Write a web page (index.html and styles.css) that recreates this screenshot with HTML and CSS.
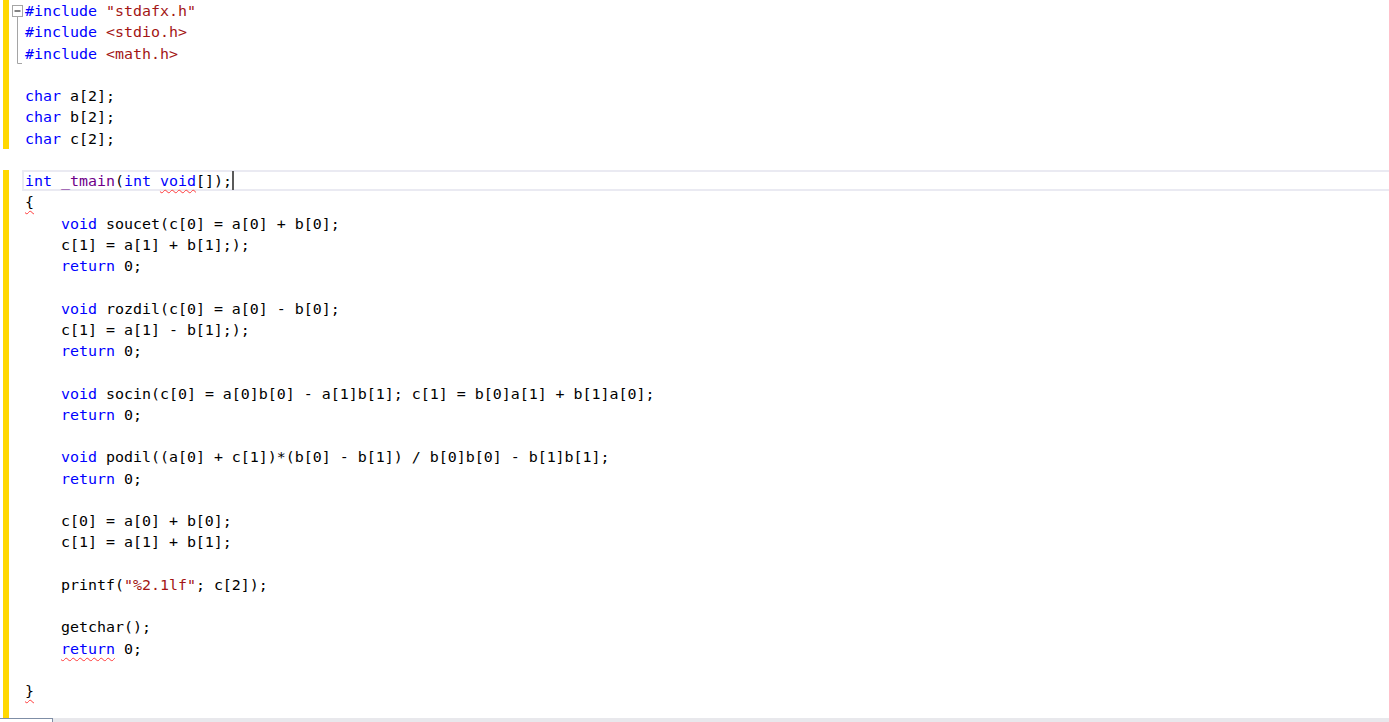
FILE: index.html
```html
<!DOCTYPE html>
<html>
<head>
<meta charset="utf-8">
<link rel="stylesheet" href="styles.css">
</head>
<body>
<div class="editor">
  <div class="line chg"><span class="mark"></span><span class="fold"><svg width="16" height="22" viewBox="0 0 16 22"><rect x="3.5" y="5.5" width="10" height="11" fill="#fff" stroke="#a5a5a5"/><line x1="5.5" y1="11" x2="11.5" y2="11" stroke="#333" stroke-width="1.2"/><line x1="8.5" y1="16.5" x2="8.5" y2="22" stroke="#a5a5a5"/></svg></span><span class="code"><span class="kw">#include</span> <span class="str">"stdafx.h"</span></span></div>
  <div class="line chg"><span class="mark"></span><span class="fold"><svg width="16" height="22" viewBox="0 0 16 22"><line x1="8.5" y1="0" x2="8.5" y2="22" stroke="#a5a5a5"/></svg></span><span class="code"><span class="kw">#include</span> <span class="str">&lt;stdio.h&gt;</span></span></div>
  <div class="line chg"><span class="mark"></span><span class="fold"><svg width="16" height="22" viewBox="0 0 16 22"><path d="M8.5 0V20.5H13" fill="none" stroke="#a5a5a5"/></svg></span><span class="code"><span class="kw">#include</span> <span class="str">&lt;math.h&gt;</span></span></div>
  <div class="line chg"><span class="mark"></span><span class="fold"></span><span class="code"> </span></div>
  <div class="line chg"><span class="mark"></span><span class="fold"></span><span class="code"><span class="kw">char</span> a[2];</span></div>
  <div class="line chg"><span class="mark"></span><span class="fold"></span><span class="code"><span class="kw">char</span> b[2];</span></div>
  <div class="line chg"><span class="mark"></span><span class="fold"></span><span class="code"><span class="kw">char</span> c[2];</span></div>
  <div class="line"><span class="mark"></span><span class="fold"></span><span class="code"> </span></div>
  <div class="line chg current"><span class="mark"></span><span class="fold"></span><span class="code"><span class="kw">int</span> <span class="fn">_tmain</span>(<span class="kw">int</span> <span class="kw err">void</span>[]);<span class="caret"></span></span></div>
  <div class="line chg"><span class="mark"></span><span class="fold"></span><span class="code"><span class="err">{</span></span></div>
  <div class="line chg"><span class="mark"></span><span class="fold"></span><span class="code">    <span class="kw">void</span> soucet(c[0] = a[0] + b[0];</span></div>
  <div class="line chg"><span class="mark"></span><span class="fold"></span><span class="code">    c[1] = a[1] + b[1];);</span></div>
  <div class="line chg"><span class="mark"></span><span class="fold"></span><span class="code">    <span class="kw">return</span> 0;</span></div>
  <div class="line chg"><span class="mark"></span><span class="fold"></span><span class="code"> </span></div>
  <div class="line chg"><span class="mark"></span><span class="fold"></span><span class="code">    <span class="kw">void</span> rozdil(c[0] = a[0] - b[0];</span></div>
  <div class="line chg"><span class="mark"></span><span class="fold"></span><span class="code">    c[1] = a[1] - b[1];);</span></div>
  <div class="line chg"><span class="mark"></span><span class="fold"></span><span class="code">    <span class="kw">return</span> 0;</span></div>
  <div class="line chg"><span class="mark"></span><span class="fold"></span><span class="code"> </span></div>
  <div class="line chg"><span class="mark"></span><span class="fold"></span><span class="code">    <span class="kw">void</span> socin(c[0] = a[0]b[0] - a[1]b[1]; c[1] = b[0]a[1] + b[1]a[0];</span></div>
  <div class="line chg"><span class="mark"></span><span class="fold"></span><span class="code">    <span class="kw">return</span> 0;</span></div>
  <div class="line chg"><span class="mark"></span><span class="fold"></span><span class="code"> </span></div>
  <div class="line chg"><span class="mark"></span><span class="fold"></span><span class="code">    <span class="kw">void</span> podil((a[0] + c[1])*(b[0] - b[1]) / b[0]b[0] - b[1]b[1];</span></div>
  <div class="line chg"><span class="mark"></span><span class="fold"></span><span class="code">    <span class="kw">return</span> 0;</span></div>
  <div class="line chg"><span class="mark"></span><span class="fold"></span><span class="code"> </span></div>
  <div class="line chg"><span class="mark"></span><span class="fold"></span><span class="code">    c[0] = a[0] + b[0];</span></div>
  <div class="line chg"><span class="mark"></span><span class="fold"></span><span class="code">    c[1] = a[1] + b[1];</span></div>
  <div class="line chg"><span class="mark"></span><span class="fold"></span><span class="code"> </span></div>
  <div class="line chg"><span class="mark"></span><span class="fold"></span><span class="code">    printf(<span class="str">"%2.1lf"</span>; c[2]);</span></div>
  <div class="line chg"><span class="mark"></span><span class="fold"></span><span class="code"> </span></div>
  <div class="line chg"><span class="mark"></span><span class="fold"></span><span class="code">    getchar();</span></div>
  <div class="line chg"><span class="mark"></span><span class="fold"></span><span class="code">    <span class="kw err">return</span> 0;</span></div>
  <div class="line chg"><span class="mark"></span><span class="fold"></span><span class="code"> </span></div>
  <div class="line chg"><span class="mark"></span><span class="fold"></span><span class="code"><span class="err">}</span></span></div>
  <div class="line chg filler"><span class="mark"></span><span class="fold"></span><span class="code"></span></div>
</div>
<div class="hscroll"><div class="thumb"></div><div class="track"></div></div>
</body>
</html>
```

FILE: styles.css
```css
html, body {
  margin: 0;
  padding: 0;
  background: #ffffff;
  height: 722px;
  overflow: hidden;
}

.editor {
  height: 718px;
  display: flex;
  flex-direction: column;
  font-family: "DejaVu Sans Mono", "Liberation Mono", monospace;
  font-size: 14.95px;
  color: #000000;
}

.line {
  display: flex;
  height: 21.25px;
  line-height: 21.25px;
  flex: none;
}

.line.filler {
  flex: 1;
}

.mark {
  width: 6px;
  margin-left: 3px;
  flex: none;
}

.chg .mark {
  background: #ffd800;
}

.fold {
  width: 16px;
  flex: none;
  display: flex;
}

.fold svg {
  display: block;
}

.code {
  white-space: pre;
  flex: 1;
  padding-top: 1px;
}

.current .code {
  margin-left: -3px;
  margin-right: -4px;
  padding-left: 3px;
  box-shadow: inset 0 0 0 2px #eaeaf2;
}

.caret {
  display: inline-block;
  width: 2px;
  height: 19px;
  background: #5a5a5a;
  vertical-align: top;
}

.kw {
  color: #0000ff;
}

.str {
  color: #a31515;
}

.fn {
  color: #6f008a;
}

.err {
  text-decoration: underline wavy #ff3b3b;
  text-decoration-thickness: 1px;
  text-underline-offset: 3px;
  text-decoration-skip-ink: none;
}

.hscroll {
  height: 4px;
  display: flex;
}

.thumb {
  width: 52px;
  background: #ffffff;
  border-top: 1px solid #7f8ea6;
  border-right: 1px solid #7f8ea6;
}

.track {
  flex: 1;
  background: #e8e8ec;
}
```
